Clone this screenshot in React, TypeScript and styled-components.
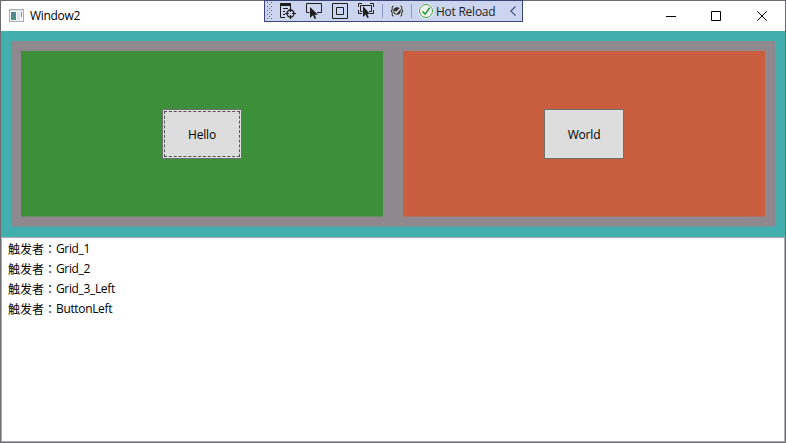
import React from "react";
import styled, { createGlobalStyle } from "styled-components";

const GlobalStyle = createGlobalStyle`
  * { box-sizing: border-box; }
  body {
    margin: 0;
    overflow: hidden;
    font-family: "Open Sans", "Noto Sans CJK SC", sans-serif;
    font-size: 12px;
    color: #000;
  }
  svg { display: block; flex: none; }
`;

const Window = styled.div`
  position: relative;
  display: flex;
  flex-direction: column;
  width: 786px;
  height: 443px;
  border: 1px solid #6b6a6e;
  background: #fff;
`;

const TitleBar = styled.header`
  display: flex;
  align-items: center;
  flex: none;
  height: 30px;
  padding-left: 8px;
`;

const AppIconSlot = styled.div`
  padding-bottom: 2px;
`;

const Title = styled.span`
  flex: 1;
  margin-left: 6px;
  line-height: 16px;
  letter-spacing: -0.3px;
`;

const CaptionButton = styled.button<{ $width: number }>`
  display: flex;
  align-items: center;
  justify-content: center;
  width: ${(p) => p.$width}px;
  height: 28px;
  padding: 0;
  border: 0;
  background: none;
`;

const DebugToolbar = styled.div`
  position: absolute;
  top: -1px;
  left: 263px;
  display: flex;
  align-items: center;
  width: 259px;
  height: 22px;
  border: 1px solid #3b4478;
  background: #ccd5f0;
`;

const ToolSlot = styled.div<{ $width: number }>`
  display: flex;
  align-items: center;
  justify-content: center;
  flex: none;
  width: ${(p) => p.$width}px;
  height: 20px;
`;

const Divider = styled.div`
  flex: none;
  width: 1px;
  height: 14px;
  background: #8e9bc8;
`;

const ReloadLabel = styled.span`
  flex: 1;
  margin-left: 2px;
  padding-top: 2px;
  line-height: 16px;
  white-space: nowrap;
  color: #1e1e1e;
  letter-spacing: -0.25px;
`;

const OuterGrid = styled.main`
  flex: none;
  height: 206px;
  padding: 10px 10px 11px;
  background: #43aeae;
`;

const InnerGrid = styled.div`
  display: grid;
  grid-template-columns: 1fr 1fr;
  gap: 20px;
  height: 185px;
  padding: 10px;
  background: #8f888e;
  box-shadow: 0 1px #8f888e80;
`;

const Pane = styled.section<{ $color: string }>`
  display: flex;
  align-items: center;
  justify-content: center;
  background: ${(p) => p.$color};
  box-shadow: 0 1px ${(p) => p.$color}80;
`;

const PaneButton = styled.button`
  width: 80px;
  height: 50px;
  padding: 1px;
  border: 1px solid #707070;
  background: #ddd;
  font: inherit;
  color: #000;
  letter-spacing: -0.2px;
`;

const FocusFrame = styled.span<{ $focused?: boolean }>`
  display: flex;
  align-items: center;
  justify-content: center;
  height: 100%;
  padding-top: 2px;
  border: 1px dashed ${(p) => (p.$focused ? "#555" : "transparent")};
`;

const LogList = styled.ul`
  flex: 1;
  margin: 0;
  padding: 1px 6px;
  border: 1px solid #abadb3;
  list-style: none;
`;

const LogItem = styled.li`
  display: flex;
  align-items: center;
  height: 20px;
  line-height: 20px;
  white-space: nowrap;
`;

const LogPrefix = styled.span`
  flex: none;
  width: 48px;
  font-family: "Noto Sans CJK SC", sans-serif;
`;

const Colon = styled.span`
  font-family: "Noto Sans CJK TC", sans-serif;
`;

const LogName = styled.span`
  letter-spacing: -0.35px;
`;

const AppIcon = () => (
  <svg width="15" height="13" viewBox="0 0 15 13" shapeRendering="crispEdges">
    <defs>
      <linearGradient id="screen" x1="0" y1="0" x2="1" y2="1">
        <stop offset="0" stopColor="#5578a0" />
        <stop offset="1" stopColor="#4a9d78" />
      </linearGradient>
    </defs>
    <path d="M0 0h15v13H0z" fill="#a9afb5" />
    <path d="M1 1h13v1H1z" fill="#dce0e4" />
    <path d="M1 2h13v10H1z" fill="#f1f3f4" />
    <path d="M2 3h5v8H2z" fill="url(#screen)" />
    <path d="M8 3h3v8H8z" fill="#dde5e8" />
    <path d="M12 3h1v5h-1z" fill="#719ba8" />
  </svg>
);

const Grip = () => (
  <svg width="6" height="18" viewBox="0 0 6 18" shapeRendering="crispEdges">
    <defs>
      <pattern id="grip" width="4" height="4" patternUnits="userSpaceOnUse">
        <path d="M0 0h1v1H0zM2 2h1v1H2z" fill="#53618f" />
      </pattern>
    </defs>
    <path d="M0 0h6v18H0z" fill="url(#grip)" />
  </svg>
);

const TreeIcon = () => (
  <svg width="16" height="16" viewBox="0 0 16 16" fill="none" stroke="#1e1e1e">
    <path d="M0 0h11v3H0z" fill="#1e1e1e" stroke="none" />
    <path d="M.5 2v12.500H5M10.500 3v2M3 5.500h5M3 8.500h2M3 11.500h2" />
    <circle cx="10.500" cy="10.500" r="3.500" strokeWidth="1.300" />
    <path d="M10.500 5v4M10.500 12v4M5 10.500h4M12 10.500h4" strokeWidth="1.200" />
  </svg>
);

const SelectIcon = () => (
  <svg width="16" height="16" viewBox="0 0 16 16">
    <path d="M3.500 9.500H.5v-9h15v9H11" fill="none" stroke="#1e1e1e" />
    <path d="M4 4v11l3-2.800L8.500 16l1.700-.8-1.600-3.500H12z" fill="#1e1e1e" />
  </svg>
);

const AdornerIcon = () => (
  <svg width="16" height="16" viewBox="0 0 16 16" fill="none" stroke="#1e1e1e">
    <path d="M.5.5h15v15H.5zM4.500 4.500h7v7h-7z" />
  </svg>
);

const TrackIcon = () => (
  <svg width="16" height="16" viewBox="0 0 16 16">
    <path
      d="M.5 4V.5H4M12 .5h3.500V4M.5 7v3.500H4M12 10.500h3.500V7M4.500 8.500h-2v-6h11v6H11"
      fill="none"
      stroke="#1e1e1e"
    />
    <path d="M5 3v11l2.700-2.500L9.200 15l1.600-.7L9.300 11H12z" fill="#1e1e1e" />
  </svg>
);

const BRACES =
  "M3.800 1C2 1 2.200 2 2.200 3.500S2 6 .7 6c1.300 0 1.500 1 1.500 2.500S2 11 3.800 11M10.200 1C12 1 11.800 2 11.800 3.500S12 6 13.300 6c-1.300 0-1.500 1-1.500 2.500s.2 2.500-1.600 2.500";

const BindingIcon = () => (
  <svg width="14" height="12" viewBox="0 0 14 12" fill="none">
    <path d={BRACES} stroke="#eef1fa" strokeWidth="2.800" />
    <path d={BRACES} stroke="#333" strokeWidth="1.200" />
    <circle cx="7" cy="6" r="3.800" fill="#333" />
    <path d="M4.500 6.200l1.700 1.800L10 3.800" stroke="#eef1fa" strokeWidth="1.300" />
  </svg>
);

const CheckIcon = () => (
  <svg width="16" height="16" viewBox="0 0 16 16" fill="none">
    <circle cx="8" cy="8" r="6.600" fill="#eff5ef" stroke="#f4f8f4" strokeWidth="2.400" />
    <circle cx="8" cy="8" r="6.500" stroke="#3c9948" />
    <path d="M4.500 8.500l2.600 2.600L11.700 4.800" stroke="#2d963c" strokeWidth="1.600" />
  </svg>
);

const toolIcons = [TreeIcon, SelectIcon, AdornerIcon, TrackIcon];

const captionButtons = [
  { label: "Minimize", width: 44, path: "M0 5.500h10" },
  { label: "Maximize", width: 46, path: "M.5.5h9v9h-9z" },
  { label: "Close", width: 46, path: "M.3.3l9.400 9.400M9.700.3L.3 9.700" },
];

const entries = ["Grid_1", "Grid_2", "Grid_3_Left", "ButtonLeft"];

export default function App() {
  return (
    <>
      <GlobalStyle />
      <Window>
        <TitleBar>
          <AppIconSlot>
            <AppIcon />
          </AppIconSlot>
          <Title>Window2</Title>
          {captionButtons.map(({ label, width, path }) => (
            <CaptionButton key={label} $width={width} aria-label={label}>
              <svg width="10" height="10" viewBox="0 0 10 10" fill="none" stroke="#000">
                <path d={path} />
              </svg>
            </CaptionButton>
          ))}
        </TitleBar>
        <OuterGrid>
          <InnerGrid>
            <Pane $color="#3d9039">
              <PaneButton>
                <FocusFrame $focused>Hello</FocusFrame>
              </PaneButton>
            </Pane>
            <Pane $color="#c85e3d">
              <PaneButton>
                <FocusFrame>World</FocusFrame>
              </PaneButton>
            </Pane>
          </InnerGrid>
        </OuterGrid>
        <LogList>
          {entries.map((name) => (
            <LogItem key={name}>
              <LogPrefix>
                触发者<Colon lang="zh-TW">：</Colon>
              </LogPrefix>
              <LogName>{name}</LogName>
            </LogItem>
          ))}
        </LogList>
        <DebugToolbar>
          <ToolSlot $width={10}>
            <Grip />
          </ToolSlot>
          {toolIcons.map((Icon, i) => (
            <ToolSlot key={i} $width={26}>
              <Icon />
            </ToolSlot>
          ))}
          <ToolSlot $width={3} />
          <Divider />
          <ToolSlot $width={28}>
            <BindingIcon />
          </ToolSlot>
          <Divider />
          <ToolSlot $width={6} />
          <CheckIcon />
          <ReloadLabel>Hot Reload</ReloadLabel>
          <ToolSlot $width={18}>
            <svg width="6" height="10" viewBox="0 0 6 10" fill="none" stroke="#46518a">
              <path d="M5.500.5L.8 5l4.700 4.500" strokeWidth="1.200" />
            </svg>
          </ToolSlot>
        </DebugToolbar>
      </Window>
    </>
  );
}
